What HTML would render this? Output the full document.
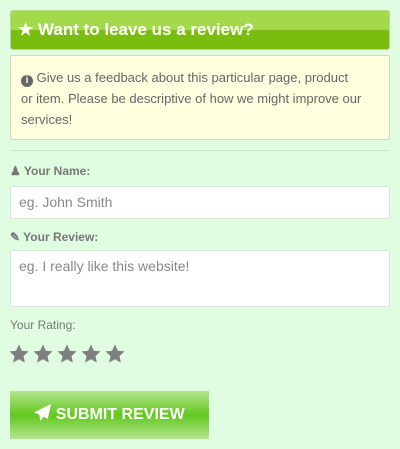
<!DOCTYPE html>
<html><head><meta charset="utf-8"><style>
*{box-sizing:border-box;margin:0;padding:0}
html,body{width:400px;height:449px;background:#e0fde2;font-family:"Liberation Sans",sans-serif;color:#555;overflow:hidden;position:relative}
.hdr{position:absolute;left:10px;top:10px;width:380px;height:40px;border:1px solid #b9d98f;border-radius:3px;background:linear-gradient(#a3d94a 0,#a3d94a 50%,#7bbd12 50%,#79bb0d 100%);color:#fff;font-weight:bold;font-size:17px;line-height:38px;padding-left:7px}
.info{position:absolute;left:10px;top:55px;width:380px;height:85px;background:#fffedf;border:1px solid #d6d6c8;border-radius:2px;padding:11px 10px 0 10px;font-size:13px;line-height:21px;color:#666}
.hr{position:absolute;left:10px;top:150px;width:380px;height:1px;background:#c6e6c9}
.lbl{position:absolute;left:10px;font-size:12px;color:#777;font-weight:bold}
.inp{position:absolute;left:10px;width:380px;background:#fff;border:1px solid #d8e8d8;font-size:14px;color:#888;padding-left:8px}
.stars{position:absolute;left:9px;top:344px}
.btn{position:absolute;left:10px;top:391px;width:199px;height:48px;background:linear-gradient(#b4e590 0,#62c81e 50%,#b4e590 100%);color:#fff;font-weight:bold;font-size:16px;line-height:48px;text-align:center}
</style></head><body>
<div class="hdr">★ Want to leave us a review?</div>
<div class="info"><span style="display:inline-block;width:12px;height:12px;border-radius:6px;background:#666;color:#fffedf;font-size:10px;line-height:12px;text-align:center;font-weight:bold;vertical-align:-1px">i</span> Give us a feedback about this particular page, product<br>or item. Please be descriptive of how we might improve our services!</div>
<div class="hr"></div>
<div class="lbl" style="top:164px">&#9823; Your Name:</div>
<div class="inp" style="top:186px;height:33px;line-height:31px">eg. John Smith</div>
<div class="lbl" style="top:230px">✎ Your Review:</div>
<div class="inp" style="top:250px;height:57px;padding-top:7px">eg. I really like this website!</div>
<div class="lbl" style="top:318px;font-weight:normal">Your Rating:</div>
<svg class="stars" width="120" height="20" viewBox="0 0 120 20" fill="#808080">
<defs><path id="s" d="M10 0.5l2.9 6.2 6.6.7-5 4.6 1.4 6.6L10 15.2 4.1 18.6l1.4-6.6-5-4.6 6.6-.7z"/></defs>
<use href="#s" x="0"/><use href="#s" x="24"/><use href="#s" x="48"/><use href="#s" x="72"/><use href="#s" x="96"/>
</svg>
<div class="btn"><svg width="17" height="17" viewBox="0 0 16 16" style="vertical-align:-2px"><path d="M16 0L0 8l5 2 1 6 3-4 4 2z" fill="#fff"/></svg> SUBMIT REVIEW</div>
</body></html>
